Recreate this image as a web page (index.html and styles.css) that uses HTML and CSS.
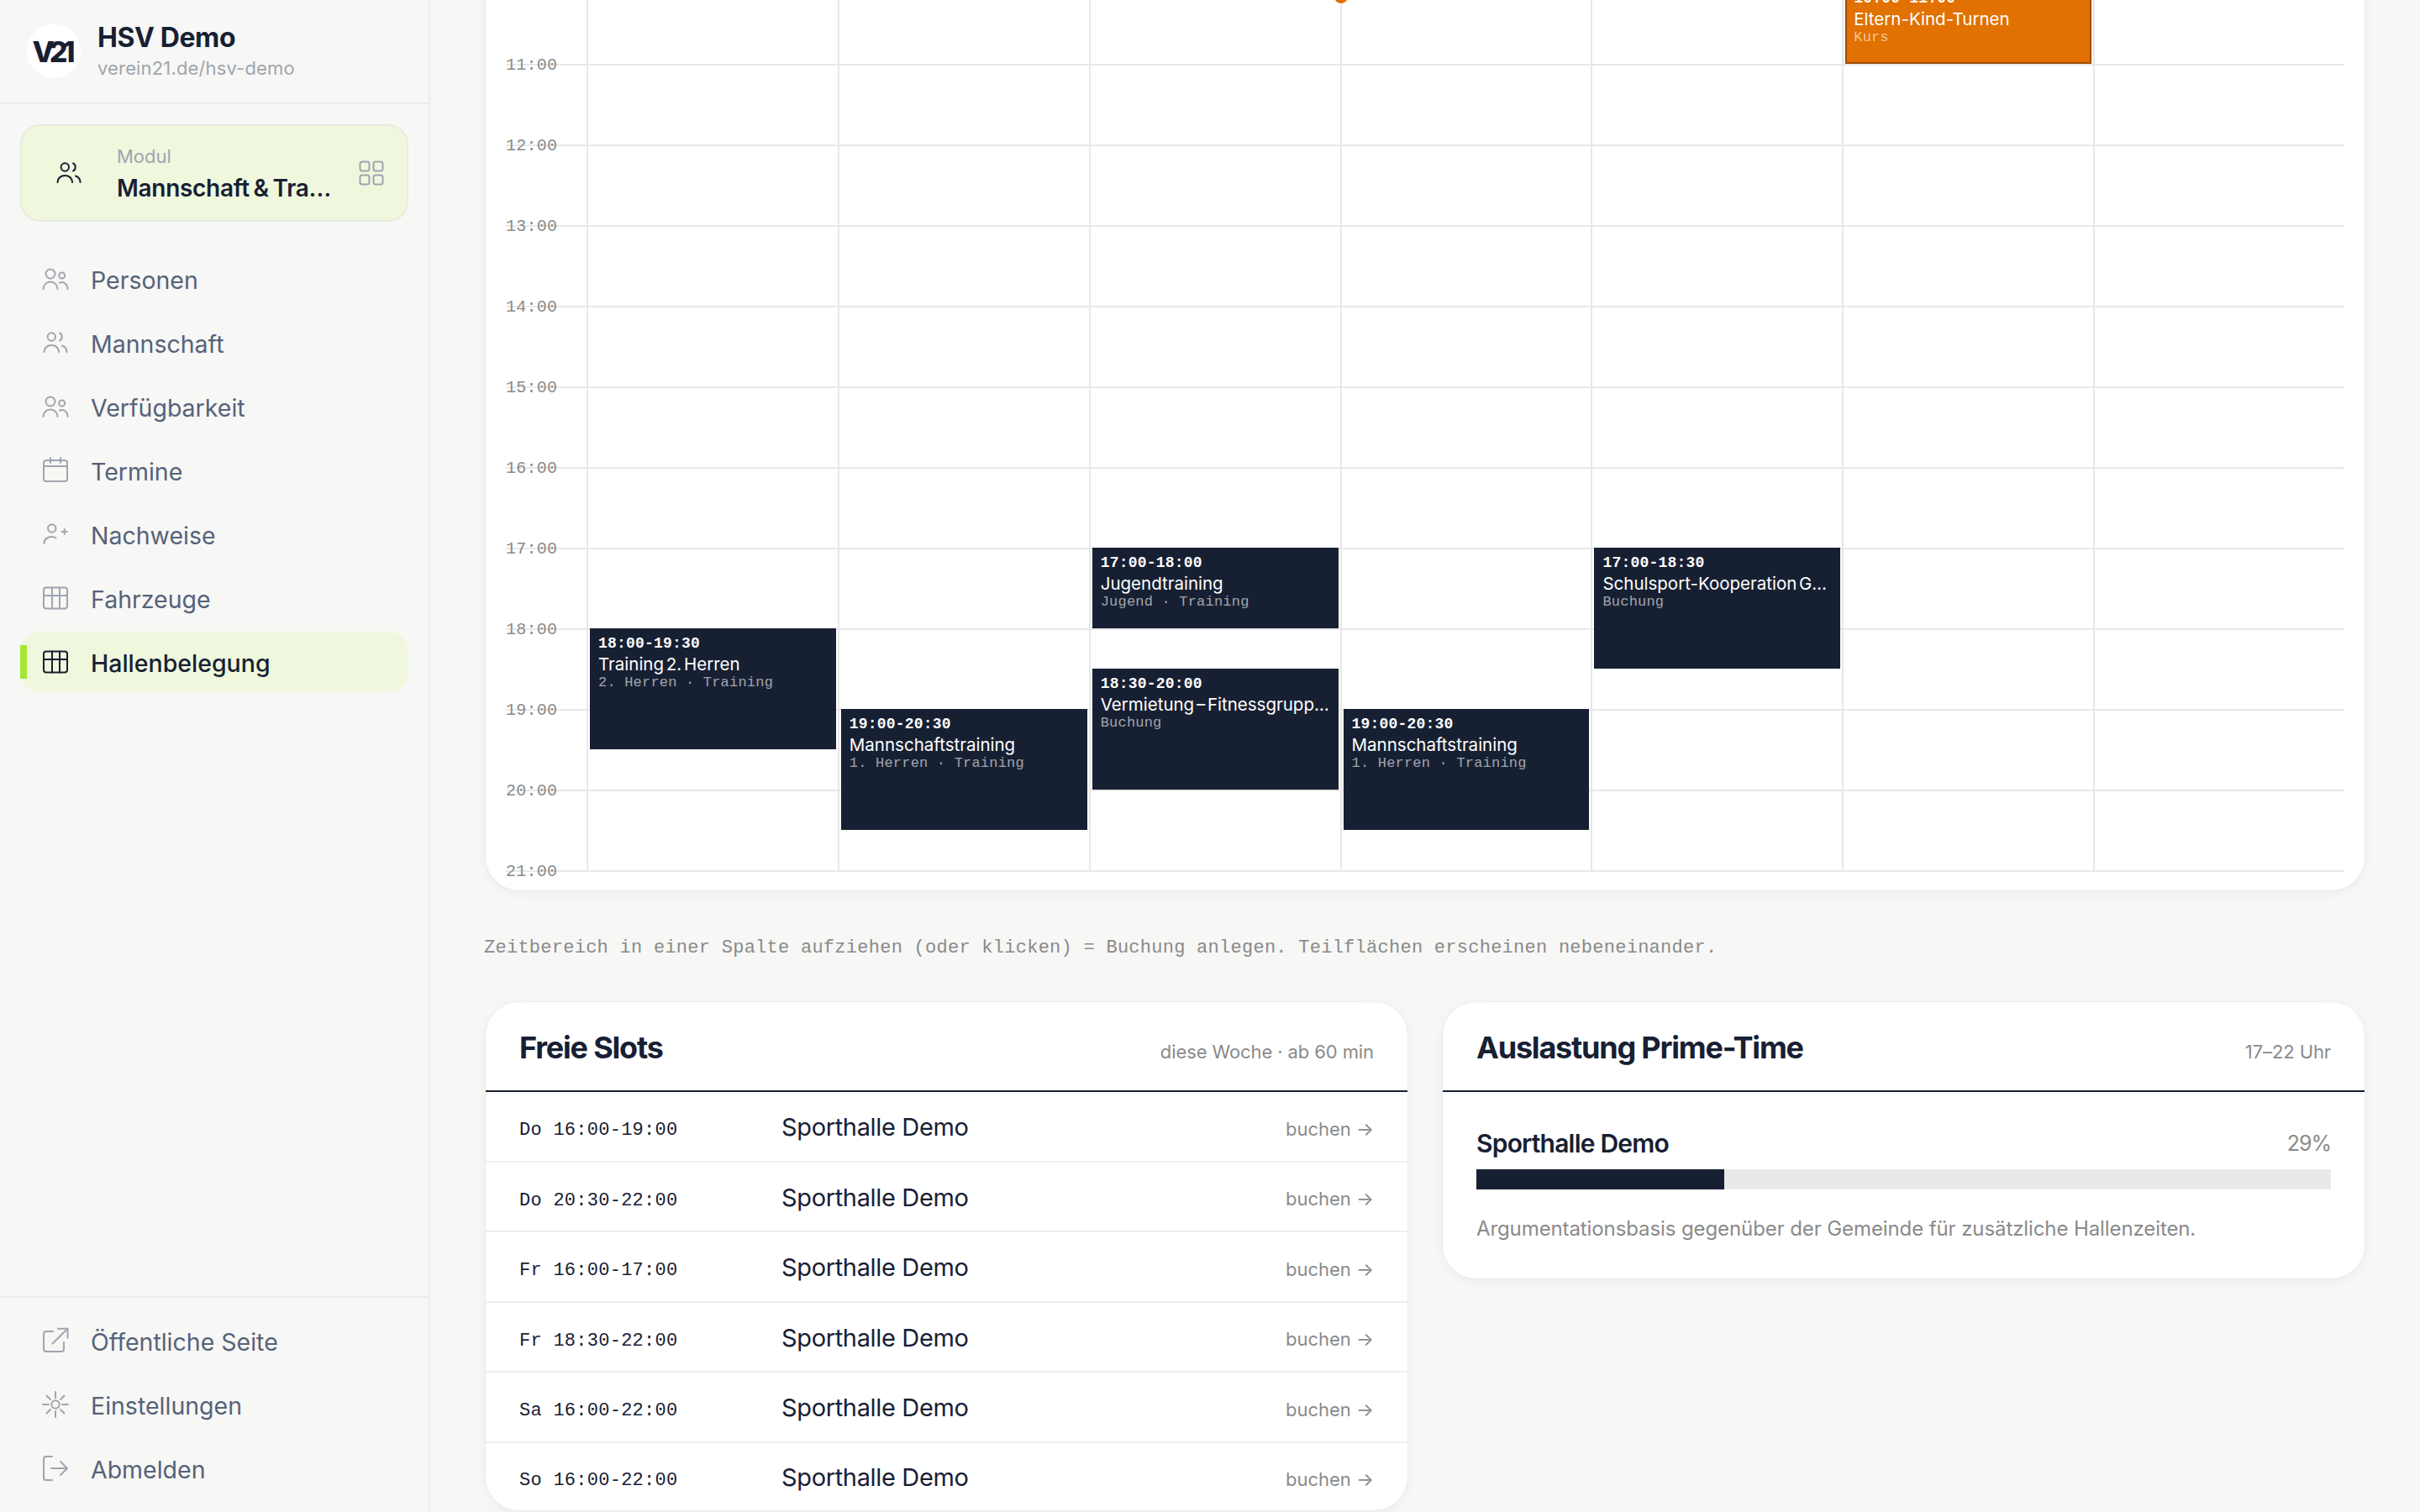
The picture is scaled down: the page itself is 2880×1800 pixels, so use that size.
FILE: index.html
```html
<!DOCTYPE html>
<html lang="de">
<head>
  <meta charset="utf-8">
  <title>Hallenbelegung - HSV Demo</title>
  <link rel="stylesheet" href="styles.css">
</head>
<body>

<svg class="sprite" width="0" height="0">
  <symbol id="i-people" viewBox="0 0 32 32">
    <circle cx="10" cy="10" r="5.5"/>
    <circle cx="23.7" cy="12" r="3.5"/>
    <path d="M1.5 28c0-5 3.800-8.500 8.500-8.500s8.500 3.500 8.500 8.500"/>
    <path d="M21 20.500c5-1.500 9.500 1.500 9.500 7.500"/>
  </symbol>
  <symbol id="i-team" viewBox="0 0 32 32">
    <circle cx="11.300" cy="9" r="4.700"/>
    <path d="M2.500 27c0-5 4-8 8.800-8s8.800 3 8.800 8"/>
    <path d="M21 4.500c3.500.8 3.500 8.200 0 9"/>
    <path d="M24 19.500c3.300 1.200 5.500 3.800 5.500 7.500"/>
  </symbol>
  <symbol id="i-calendar" viewBox="0 0 32 32">
    <rect x="2" y="4" width="28" height="25" rx="3"/>
    <path d="M2 11h28M10 1v6M22 1v6"/>
  </symbol>
  <symbol id="i-userplus" viewBox="0 0 32 32">
    <circle cx="11.700" cy="9" r="4.700"/>
    <path d="M2.500 27c0-5 4-8 9-8 2 0 3.500.5 5 1.500"/>
    <path d="M26.700 10v6M23.700 13h6"/>
  </symbol>
  <symbol id="i-table" viewBox="0 0 32 32">
    <rect x="2" y="3.500" width="28" height="25" rx="3"/>
    <path d="M2 13h28M12 3.500v25M21 3.500v25"/>
  </symbol>
  <symbol id="i-grid" viewBox="0 0 32 32">
    <rect x="2.500" y="2.500" width="11" height="11" rx="2.500"/>
    <rect x="18.500" y="2.500" width="11" height="11" rx="2.500"/>
    <rect x="2.500" y="18.500" width="11" height="11" rx="2.500"/>
    <rect x="18.500" y="18.500" width="11" height="11" rx="2.500"/>
  </symbol>
  <symbol id="i-external" viewBox="0 0 32 32">
    <path d="M13 5H5a3 3 0 0 0-3 3v18a3 3 0 0 0 3 3h18a3 3 0 0 0 3-3v-8"/>
    <path d="M12.500 19.500L30.500 1.700M19 1.700h11.500v11"/>
  </symbol>
  <symbol id="i-sun" viewBox="0 0 32 32">
    <circle cx="16" cy="16" r="4.700"/>
    <path d="M16 1v7M16 24v7M1 16h7M24 16h7M5.500 5.500l4.500 4.500M22 22l4.500 4.500M5.500 26.500L10 22M22 10l4.500-4.500"/>
  </symbol>
  <symbol id="i-logout" viewBox="0 0 32 32">
    <path d="M12 2H5a3 3 0 0 0-3 3v22a3 3 0 0 0 3 3h7"/>
    <path d="M11 16h19M22 8l8 8-8 8"/>
  </symbol>
</svg>

<div class="app">

  <aside class="sidebar">
    <div class="club">
      <div class="club-logo">V21</div>
      <div>
        <div class="club-name">HSV Demo</div>
        <div class="club-url">verein21.de/hsv-demo</div>
      </div>
    </div>

    <div class="module">
      <svg class="icon module-icon"><use href="#i-team"/></svg>
      <div class="module-text">
        <div class="module-label">Modul</div>
        <div class="module-name">Mannschaft &amp; Training und mehr</div>
      </div>
      <svg class="icon"><use href="#i-grid"/></svg>
    </div>

    <nav class="nav">
      <a class="nav-link" href="#"><svg class="icon"><use href="#i-people"/></svg>Personen</a>
      <a class="nav-link" href="#"><svg class="icon"><use href="#i-team"/></svg>Mannschaft</a>
      <a class="nav-link" href="#"><svg class="icon"><use href="#i-people"/></svg>Verfügbarkeit</a>
      <a class="nav-link" href="#"><svg class="icon"><use href="#i-calendar"/></svg>Termine</a>
      <a class="nav-link" href="#"><svg class="icon"><use href="#i-userplus"/></svg>Nachweise</a>
      <a class="nav-link" href="#"><svg class="icon"><use href="#i-table"/></svg>Fahrzeuge</a>
      <a class="nav-link active" href="#"><svg class="icon"><use href="#i-table"/></svg>Hallenbelegung</a>
    </nav>

    <nav class="nav nav-foot">
      <a class="nav-link" href="#"><svg class="icon"><use href="#i-external"/></svg>Öffentliche Seite</a>
      <a class="nav-link" href="#"><svg class="icon"><use href="#i-sun"/></svg>Einstellungen</a>
      <a class="nav-link" href="#"><svg class="icon"><use href="#i-logout"/></svg>Abmelden</a>
    </nav>
  </aside>

  <main class="main">

    <section class="card calendar">
      <div class="cal-grid">
        <div class="hour"><span>10:00</span></div>
        <div class="hour"><span>11:00</span></div>
        <div class="hour"><span>12:00</span></div>
        <div class="hour"><span>13:00</span></div>
        <div class="hour"><span>14:00</span></div>
        <div class="hour"><span>15:00</span></div>
        <div class="hour"><span>16:00</span></div>
        <div class="hour"><span>17:00</span></div>
        <div class="hour"><span>18:00</span></div>
        <div class="hour"><span>19:00</span></div>
        <div class="hour"><span>20:00</span></div>
        <div class="hour hour-last"><span>21:00</span></div>

        <div class="cols">
          <div class="col">
            <div class="event h15 from-18">
              <div class="ev-time">18:00-19:30</div>
              <div class="ev-name">Training 2. Herren</div>
              <div class="ev-sub">2. Herren · Training</div>
            </div>
          </div>
          <div class="col">
            <div class="event h15 from-19">
              <div class="ev-time">19:00-20:30</div>
              <div class="ev-name">Mannschaftstraining</div>
              <div class="ev-sub">1. Herren · Training</div>
            </div>
          </div>
          <div class="col">
            <div class="event h10 from-17">
              <div class="ev-time">17:00-18:00</div>
              <div class="ev-name">Jugendtraining</div>
              <div class="ev-sub">Jugend · Training</div>
            </div>
            <div class="event h15 from-1830">
              <div class="ev-time">18:30-20:00</div>
              <div class="ev-name">Vermietung – Fitnessgruppe Nord</div>
              <div class="ev-sub">Buchung</div>
            </div>
          </div>
          <div class="col">
            <span class="now-dot"></span>
            <div class="event h15 from-19">
              <div class="ev-time">19:00-20:30</div>
              <div class="ev-name">Mannschaftstraining</div>
              <div class="ev-sub">1. Herren · Training</div>
            </div>
          </div>
          <div class="col">
            <div class="event h15 from-17">
              <div class="ev-time">17:00-18:30</div>
              <div class="ev-name">Schulsport-Kooperation Gymnasium</div>
              <div class="ev-sub">Buchung</div>
            </div>
          </div>
          <div class="col">
            <div class="event event-course h10 from-10">
              <div class="ev-time">10:00-11:00</div>
              <div class="ev-name">Eltern-Kind-Turnen</div>
              <div class="ev-sub">Kurs</div>
            </div>
          </div>
          <div class="col"></div>
        </div>
      </div>
    </section>

    <p class="hint">Zeitbereich in einer Spalte aufziehen (oder klicken) = Buchung anlegen. Teilflächen erscheinen nebeneinander.</p>

    <div class="bottom">
      <section class="card">
        <header class="card-head">
          <h2>Freie Slots</h2>
          <span class="card-meta">diese Woche · ab 60 min</span>
        </header>
        <div class="slot"><span class="slot-time">Do 16:00-19:00</span><span class="slot-hall">Sporthalle Demo</span><a class="slot-link" href="#">buchen →</a></div>
        <div class="slot"><span class="slot-time">Do 20:30-22:00</span><span class="slot-hall">Sporthalle Demo</span><a class="slot-link" href="#">buchen →</a></div>
        <div class="slot"><span class="slot-time">Fr 16:00-17:00</span><span class="slot-hall">Sporthalle Demo</span><a class="slot-link" href="#">buchen →</a></div>
        <div class="slot"><span class="slot-time">Fr 18:30-22:00</span><span class="slot-hall">Sporthalle Demo</span><a class="slot-link" href="#">buchen →</a></div>
        <div class="slot"><span class="slot-time">Sa 16:00-22:00</span><span class="slot-hall">Sporthalle Demo</span><a class="slot-link" href="#">buchen →</a></div>
        <div class="slot"><span class="slot-time">So 16:00-22:00</span><span class="slot-hall">Sporthalle Demo</span><a class="slot-link" href="#">buchen →</a></div>
      </section>

      <section class="card">
        <header class="card-head">
          <h2>Auslastung Prime-Time</h2>
          <span class="card-meta">17–22 Uhr</span>
        </header>
        <div class="usage">
          <div class="usage-row">
            <span class="usage-hall">Sporthalle Demo</span>
            <span class="usage-value">29%</span>
          </div>
          <div class="bar"><div class="bar-fill" style="width:29%"></div></div>
          <p class="usage-note">Argumentationsbasis gegenüber der Gemeinde für zusätzliche Hallenzeiten.</p>
        </div>
      </section>
    </div>

  </main>
</div>

</body>
</html>
```

FILE: styles.css
```css
* {
  box-sizing: border-box;
}
html, body {
  height: 100%;
}
body {
  margin: 0;
  background-color: #f7f7f5;
  color: #172033;
  font-family: Inter, "Noto Sans", sans-serif;
  overflow: hidden;
}
a {
  color: inherit;
  text-decoration: none;
}
.sprite {
  position: absolute;
}
.app {
  display: flex;
  height: 1800px;
}

/* sidebar */
.sidebar {
  width: 512px;
  flex: none;
  display: flex;
  flex-direction: column;
  border-right: 2px solid #ebebe9;
}
.club {
  height: 124px;
  display: flex;
  align-items: center;
  gap: 20px;
  padding-left: 32px;
  border-bottom: 2px solid #ebebe9;
}
.club-logo {
  width: 64px;
  height: 64px;
  border-radius: 50%;
  background: #fff;
  display: flex;
  align-items: center;
  justify-content: center;
  font-size: 34px;
  font-weight: 800;
  letter-spacing: -6px;
  padding-right: 6px;
}
.club-name {
  font-size: 32px;
  line-height: 40px;
  font-weight: 700;
  letter-spacing: -0.4px;
}
.club-url {
  font-size: 22px;
  line-height: 32px;
  color: #a0a5af;
  letter-spacing: 0.15px;
}
.icon {
  width: 32px;
  height: 32px;
  flex: none;
  fill: none;
  stroke: #a0a5af;
  stroke-width: 2;
  stroke-linecap: round;
  stroke-linejoin: round;
}
.module {
  height: 116px;
  margin: 24px 24px 0;
  padding: 0 26px 0 40px;
  display: flex;
  align-items: center;
  background: #eff7dd;
  border: 2px solid #e8ecdf;
  border-radius: 24px;
}
.module-icon {
  stroke: #172033;
}
.module-text {
  width: 260px;
  margin: 0 27px 0 41px;
  padding-top: 3px;
}
.module-label {
  font-size: 22px;
  line-height: 30px;
  color: #a0a5af;
}
.module-name {
  margin-top: 3px;
  font-size: 28px;
  line-height: 40px;
  font-weight: 600;
  letter-spacing: -0.3px;
  word-spacing: -2px;
  white-space: nowrap;
  overflow: hidden;
  text-overflow: ellipsis;
}
.nav {
  display: flex;
  flex-direction: column;
  gap: 4px;
  padding: 32px 24px 0;
}
.nav-foot {
  margin-top: auto;
  padding: 15px 24px 16px;
  border-top: 2px solid #ebebe9;
}
.nav-link {
  position: relative;
  height: 72px;
  padding: 3px 0 0 26px;
  display: flex;
  align-items: center;
  gap: 26px;
  font-size: 28.5px;
  color: #56627a;
  border-radius: 24px;
}
.nav-link .icon {
  margin-top: -3px;
}
.nav-link.active {
  background: #eff7dd;
  color: #172033;
  font-weight: 500;
}
.nav-link.active .icon {
  stroke: #172033;
}
.nav-link.active::before {
  content: "";
  position: absolute;
  left: 0;
  top: 16px;
  width: 8px;
  height: 40px;
  background: #a3e635;
}

/* main column */
.main {
  flex: 1;
  min-width: 0;
  padding: 0 66px;
}
.card {
  background: #fff;
  border-radius: 40px;
  box-shadow: 0 0 0 1px rgba(0, 0, 0, 0.02), 0 3px 14px rgba(0, 0, 0, 0.05);
  overflow: hidden;
}
.calendar {
  margin-top: -60px;
  padding: 40px 24px 22px;
}
.cal-grid {
  position: relative;
}
.hour {
  height: 96px;
  border-top: 2px solid #e8e8e8;
}
.hour-last {
  height: 2px;
}
.hour span {
  display: block;
  margin-top: -12px;
  font-family: "Liberation Mono", monospace;
  font-size: 20px;
  line-height: 24px;
  letter-spacing: 0.24px;
  color: #8a8a8a;
}
.cols {
  position: absolute;
  top: 0;
  left: 96px;
  right: 0;
  bottom: 2px;
  display: grid;
  grid-template-columns: repeat(7, 1fr);
}
.col {
  position: relative;
  border-left: 2px solid #e8e8e8;
}
.event {
  position: absolute;
  left: 2px;
  right: 2px;
  padding: 7px 10px 0;
  background: #172033;
  color: #fff;
  overflow: hidden;
}
.event-course {
  background: #e17100;
  border: 2px solid #a04a06;
  padding: 5px 8px 0;
}
.h10 { height: 96px; }
.h15 { height: 144px; }
.from-10 { top: 0; }
.from-17 { top: 672px; }
.from-18 { top: 768px; }
.from-1830 { top: 816px; }
.from-19 { top: 864px; }
.ev-time {
  font-family: "Liberation Mono", monospace;
  font-size: 18px;
  line-height: 22px;
  font-weight: 700;
  letter-spacing: 0.2px;
}
.ev-name {
  padding-top: 1px;
  font-size: 20.5px;
  line-height: 26px;
  word-spacing: -3px;
  white-space: nowrap;
  overflow: hidden;
  text-overflow: ellipsis;
}
.ev-sub {
  margin-top: -1px;
  font-family: "Liberation Mono", monospace;
  font-size: 17px;
  line-height: 20px;
  letter-spacing: 0.2px;
  color: rgba(255, 255, 255, 0.6);
}
.now-dot {
  position: absolute;
  left: -9px;
  top: 8px;
  width: 16px;
  height: 16px;
  border-radius: 50%;
  background: #e17100;
}
.hint {
  margin: 57px 0 52px -2px;
  font-family: "Liberation Mono", monospace;
  font-size: 22px;
  line-height: 24px;
  letter-spacing: 0.26px;
  color: #8a8a8a;
}
.bottom {
  display: grid;
  grid-template-columns: 1fr 1fr;
  gap: 42px;
  align-items: start;
}
.card-head {
  height: 107px;
  padding: 2px 40px 0;
  display: flex;
  align-items: center;
  justify-content: space-between;
  border-bottom: 2px solid #172033;
}
.card-head h2 {
  margin: 0;
  font-size: 36px;
  font-weight: 700;
  letter-spacing: -1.2px;
}
.card-meta {
  margin-top: 10px;
  font-size: 22px;
  letter-spacing: -0.1px;
  color: #8a8a8a;
}
.slot {
  height: 83.5px;
  padding: 0 40px;
  display: grid;
  grid-template-columns: 312px 1fr auto;
  align-items: center;
  border-bottom: 2px solid #eeeeee;
}
.slot:last-child {
  height: 80px;
  border-bottom: 0;
}
.slot-time {
  padding-top: 10px;
  font-family: "Liberation Mono", monospace;
  font-size: 22px;
  letter-spacing: 0.26px;
}
.slot-hall {
  padding-top: 2px;
  font-size: 29px;
  letter-spacing: -0.35px;
}
.slot-link {
  padding-top: 6px;
  font-size: 22px;
  color: #8a8a8a;
}
.usage {
  padding: 41px 40px 42px;
}
.usage-row {
  display: flex;
  justify-content: space-between;
  align-items: center;
  height: 40px;
}
.usage-hall {
  font-size: 30px;
  font-weight: 600;
  letter-spacing: -0.8px;
}
.usage-value {
  font-size: 25px;
  letter-spacing: -1px;
  color: #8a8a8a;
}
.bar {
  height: 24px;
  margin-top: 11px;
  background: #e8e9e8;
}
.bar-fill {
  height: 100%;
  background: #172033;
}
.usage-note {
  margin: 30px 0 0;
  font-size: 24px;
  line-height: 34px;
  color: #8a8a8a;
  letter-spacing: -0.1px;
}
```
